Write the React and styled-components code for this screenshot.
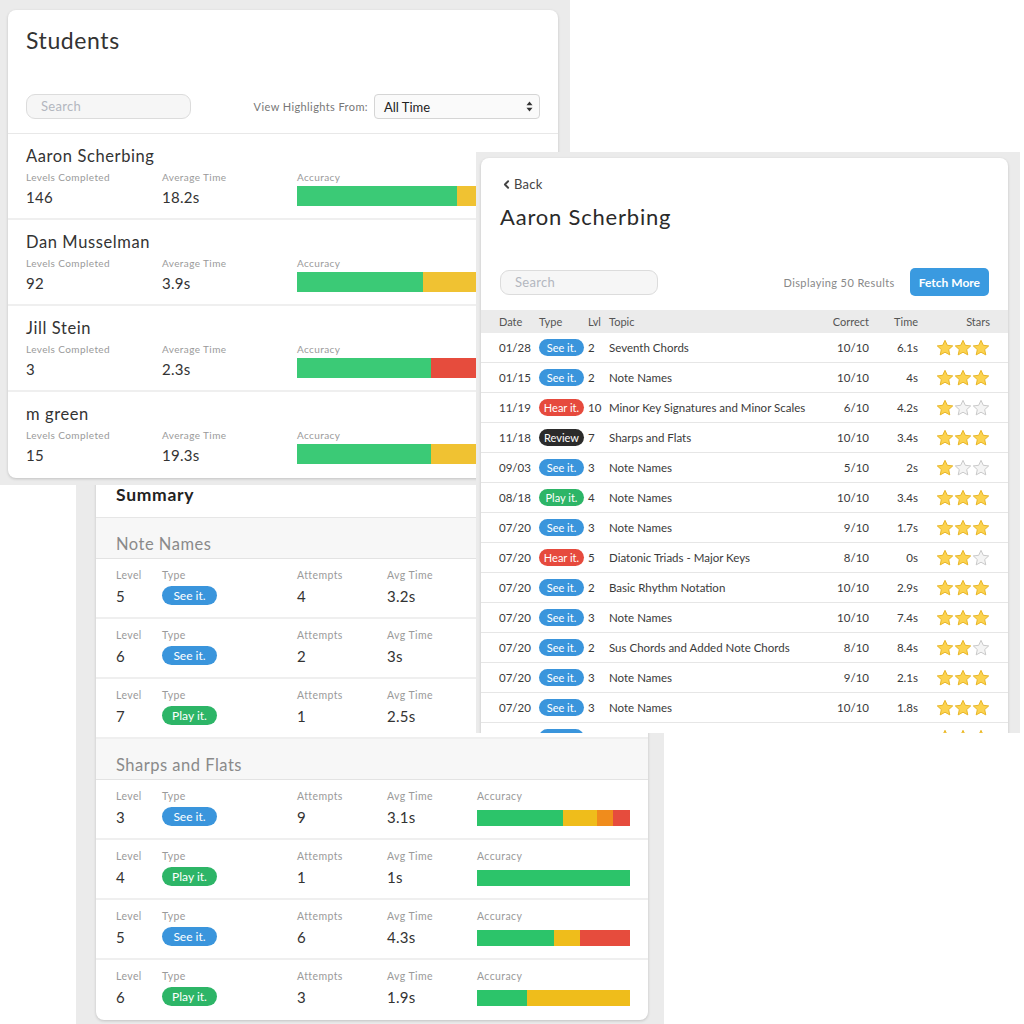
import React from 'react';
import styled, { createGlobalStyle } from 'styled-components';
import { ChevronLeft } from 'lucide-react';

const GlobalStyle = createGlobalStyle`
    body {
        margin: 0;
        background: #fff;
        font-family: "Lato", "Open Sans", sans-serif;
        color: #333;
    }
`

const Canvas = styled.div`
    position: relative;
    width: 1024px;
    height: 1024px;
    overflow: hidden;
    background: #fff;
`

// each screenshot is a window laid on the canvas
const Shot = styled.div`
    position: absolute;
    left: ${p => p.$x}px;
    top: ${p => p.$y}px;
    width: ${p => p.$w}px;
    height: ${p => p.$h}px;
    z-index: ${p => p.$z};
    padding: ${p => p.$pad};
    box-sizing: border-box;
    background: #ebebeb;
    overflow: hidden;
`
const Card = styled.div`
    background: #fff;
    border-radius: 8px;
    box-shadow: 0 1px 3px rgba(0, 0, 0, 0.18);
`

/* ---------- shared bits ---------- */

const SearchBox = styled.div`
    box-sizing: border-box;
    width: ${p => p.$w}px;
    height: 25px;
    border: 1px solid #dcdcdc;
    border-radius: 9px;
    background: #f6f6f6;
    color: #b3b7bf;
    font-size: 13px;
    letter-spacing: 0.3px;
    line-height: 23px;
    padding-left: 14px;
`
const PILL_COLORS = {
    see: '#3a95dc',
    play: '#2db567',
    hear: '#e64a3d',
    review: '#2b2b2b',
};
const PILL_TEXT = { see: 'See it.', play: 'Play it.', hear: 'Hear it.', review: 'Review' };

const Pill = styled.span`
    display: inline-flex;
    align-items: center;
    justify-content: center;
    width: ${p => p.$w}px;
    height: ${p => p.$h}px;
    border-radius: 10px;
    background: ${p => PILL_COLORS[p.$kind]};
    color: #fff;
    font-size: ${p => p.$fs}px;
`
const Bar = styled.div`
    display: flex;
    width: 100%;
    height: ${p => p.$h}px;
`
const Seg = styled.div`
    height: 100%;
    background: ${p => p.$c};
`

const AccuracyBar = ({ parts, h }) => (
    <Bar $h={h}>
        {parts.map(([c, w], i) => (
            <Seg key={i} $c={c} style={{ width: `${w}%` }} />
        ))}
    </Bar>
);

/* ---------- students ---------- */

const StudentsHead = styled.div`
    padding: 15px 18px 14px 18px;
    border-bottom: 1px solid #e8e8e8;
`
const Title = styled.h1`
    margin: 0;
    font-size: 23px;
    letter-spacing: 0.6px;
    line-height: 30px;
    font-weight: 400;
    color: #333;
`
const Toolbar = styled.div`
    display: flex;
    align-items: center;
    justify-content: space-between;
    margin-top: ${p => p.$mt}px;
`
const HighlightPick = styled.div`
    display: flex;
    align-items: center;
    gap: 6px;
    font-size: 11px;
    letter-spacing: 0.4px;
    color: #777;
`
const SelectBox = styled.div`
    box-sizing: border-box;
    display: flex;
    align-items: center;
    justify-content: space-between;
    width: 166px;
    height: 25px;
    padding: 0 6px 0 9px;
    border: 1px solid #d5d5d5;
    border-radius: 4px;
    background: #fafafa;
    font-size: 13px;
    letter-spacing: 0;
    color: #222;
`
const StudentRow = styled.div`
    padding: 12px 18px 0 18px;
    height: 86px;
    box-sizing: border-box;
    border-bottom: ${p => (p.$last ? 'none' : '2px solid #efefef')};
`
const StudentName = styled.div`
    font-size: 16.5px;
    letter-spacing: 0.6px;
    line-height: 20px;
    color: #333;
`
const StatGrid = styled.div`
    display: grid;
    grid-template-columns: 136px 135px 1fr;
    margin-top: 5px;
`
const Label = styled.div`
    font-size: ${p => p.$fs || 10}px;
    letter-spacing: 0.4px;
    line-height: 13px;
    color: #9a9a9a;
`
const Value = styled.div`
    font-size: 15px;
    letter-spacing: 0.3px;
    line-height: 20px;
    margin-top: ${p => p.$mt}px;
    color: #333;
`
const BarWrap = styled.div`
    margin-top: ${p => p.$mt}px;
`

const GREEN = '#3bca76';
const YELLOW = '#f0c232';
const RED = '#e64c3d';
const ORANGE = '#f08c1c';

const students = [
    { name: 'Aaron Scherbing', levels: 146, time: '18.2s', bar: [[GREEN, 66], [YELLOW, 20], [RED, 14]] },
    { name: 'Dan Musselman', levels: 92, time: '3.9s', bar: [[GREEN, 52], [YELLOW, 30], [RED, 18]] },
    { name: 'Jill Stein', levels: 3, time: '2.3s', bar: [[GREEN, 55], [RED, 45]] },
    { name: 'm green', levels: 15, time: '19.3s', bar: [[GREEN, 55], [YELLOW, 45]] },
];

const SortArrows = () => (
    <svg width="7" height="11" viewBox="0 0 7 11">
        <path d="M3.5 0.5 L6.5 4.2 H0.5 Z" fill="#333" />
        <path d="M3.5 10.5 L6.5 6.8 H0.5 Z" fill="#333" />
    </svg>
);

const Students = () => (
    <Card>
        <StudentsHead>
            <Title>Students</Title>
            <Toolbar $mt={39}>
                <SearchBox $w={165}>Search</SearchBox>
                <HighlightPick>
                    View Highlights From:
                    <SelectBox>
                        All Time
                        <SortArrows />
                    </SelectBox>
                </HighlightPick>
            </Toolbar>
        </StudentsHead>
        {students.map((s, i) => (
            <StudentRow key={s.name} $last={i === students.length - 1}>
                <StudentName>{s.name}</StudentName>
                <StatGrid>
                    <div>
                        <Label>Levels Completed</Label>
                        <Value $mt={3}>{s.levels}</Value>
                    </div>
                    <div>
                        <Label>Average Time</Label>
                        <Value $mt={3}>{s.time}</Value>
                    </div>
                    <div>
                        <Label>Accuracy</Label>
                        <BarWrap $mt={2}>
                            <AccuracyBar parts={s.bar} h={20} />
                        </BarWrap>
                    </div>
                </StatGrid>
            </StudentRow>
        ))}
    </Card>
);

/* ---------- student detail ---------- */

const DetailHead = styled.div`
    padding: 18px 19px 14px 19px;
`
const BackLink = styled.div`
    display: flex;
    align-items: center;
    gap: 1px;
    font-size: 13px;
    letter-spacing: 0.3px;
    line-height: 16px;
    color: #444;
`
const DetailName = styled.h2`
    margin: 12px 0 0 0;
    font-size: 22px;
    letter-spacing: 0.8px;
    line-height: 26px;
    font-weight: 400;
    color: #2a2a2a;
`
const ResultsRight = styled.div`
    display: flex;
    align-items: center;
    gap: 15px;
    font-size: 11px;
    letter-spacing: 0.4px;
    color: #888;
`
const FetchButton = styled.button`
    height: 28px;
    padding: 0 9px;
    border: none;
    border-radius: 5px;
    background: #3a9ae0;
    color: #fff;
    font-family: inherit;
    font-size: 12px;
    font-weight: 700;
`
const TableRow = styled.div`
    display: grid;
    grid-template-columns: 40px 49px 21px 220px 40px 49px 1fr;
    align-items: center;
    height: ${p => (p.$head ? 23 : 30)}px;
    padding: 0 18px;
    background: ${p => (p.$head ? '#ebebeb' : '#fff')};
    border-bottom: ${p => (p.$head ? 'none' : '1px solid #e6e6e6')};
    font-size: ${p => (p.$head ? 11 : 11.5)}px;
    color: ${p => (p.$head ? '#555' : '#3a3a3a')};
    box-sizing: border-box;
`
const Cell = styled.div`
    text-align: ${p => p.$align || 'left'};
    white-space: nowrap;
`
const Stars = styled.div`
    display: flex;
    justify-content: flex-end;
    gap: 0;
`

const Star = ({ on }) => (
    <svg width="18" height="18" viewBox="0 0 24 24">
        <polygon
            points="12,1.8 15.1,8.4 22.3,9.2 16.9,14.1 18.4,21.2 12,17.6 5.6,21.2 7.1,14.1 1.7,9.2 8.9,8.4"
            fill={on ? '#fcd34f' : '#f4f4f4'}
            stroke={on ? '#e7b526' : '#c9c9c9'}
            strokeWidth="1.3"
            strokeLinejoin="round"
        />
    </svg>
);

const history = [
    ['01/28', 'see', 2, 'Seventh Chords', '10/10', '6.1s', 3],
    ['01/15', 'see', 2, 'Note Names', '10/10', '4s', 3],
    ['11/19', 'hear', 10, 'Minor Key Signatures and Minor Scales', '6/10', '4.2s', 1],
    ['11/18', 'review', 7, 'Sharps and Flats', '10/10', '3.4s', 3],
    ['09/03', 'see', 3, 'Note Names', '5/10', '2s', 1],
    ['08/18', 'play', 4, 'Note Names', '10/10', '3.4s', 3],
    ['07/20', 'see', 3, 'Note Names', '9/10', '1.7s', 3],
    ['07/20', 'hear', 5, 'Diatonic Triads - Major Keys', '8/10', '0s', 2],
    ['07/20', 'see', 2, 'Basic Rhythm Notation', '10/10', '2.9s', 3],
    ['07/20', 'see', 3, 'Note Names', '10/10', '7.4s', 3],
    ['07/20', 'see', 2, 'Sus Chords and Added Note Chords', '8/10', '8.4s', 2],
    ['07/20', 'see', 3, 'Note Names', '9/10', '2.1s', 3],
    ['07/20', 'see', 3, 'Note Names', '10/10', '1.8s', 3],
    ['07/20', 'see', 3, 'Note Names', '10/10', '2.4s', 3],
];

const Detail = () => (
    <Card>
        <DetailHead>
            <BackLink>
                <ChevronLeft size={13} strokeWidth={3.5} />
                Back
            </BackLink>
            <DetailName>Aaron Scherbing</DetailName>
            <Toolbar $mt={38}>
                <SearchBox $w={158}>Search</SearchBox>
                <ResultsRight>
                    Displaying 50 Results
                    <FetchButton type="button">Fetch More</FetchButton>
                </ResultsRight>
            </Toolbar>
        </DetailHead>
        <TableRow $head>
            <Cell>Date</Cell>
            <Cell>Type</Cell>
            <Cell>Lvl</Cell>
            <Cell>Topic</Cell>
            <Cell $align="right">Correct</Cell>
            <Cell $align="right">Time</Cell>
            <Cell $align="right">Stars</Cell>
        </TableRow>
        {history.map(([date, kind, lvl, topic, correct, time, stars], i) => (
            <TableRow key={i}>
                <Cell>{date}</Cell>
                <Cell>
                    <Pill $kind={kind} $w={45} $h={17} $fs={11}>{PILL_TEXT[kind]}</Pill>
                </Cell>
                <Cell>{lvl}</Cell>
                <Cell>{topic}</Cell>
                <Cell $align="right">{correct}</Cell>
                <Cell $align="right">{time}</Cell>
                <Stars>
                    {[0, 1, 2].map(n => <Star key={n} on={n < stars} />)}
                </Stars>
            </TableRow>
        ))}
    </Card>
);

/* ---------- summary ---------- */

const SummaryHead = styled.div`
    padding: 24px 20px 11px 20px;
    font-size: 17.5px;
    letter-spacing: 0.7px;
    line-height: 22px;
    font-weight: 700;
    color: #222;
    border-bottom: 1px solid #e6e6e6;
`
const SectionHead = styled.div`
    padding: 16px 20px 4px 20px;
    background: #f7f7f7;
    border-bottom: 1px solid #e3e3e3;
    font-size: 16.5px;
    letter-spacing: 0.5px;
    line-height: 20px;
    color: #8a8a8a;
`
const LevelRow = styled.div`
    display: grid;
    grid-template-columns: 46px 135px 90px 90px 1fr;
    height: 60px;
    box-sizing: border-box;
    padding: 10px 18px 0 20px;
    border-bottom: ${p => (p.$last ? 'none' : '2px solid #efefef')};
`
const PillSpot = styled.div`
    margin-top: 2px;
`

const SGREEN = '#2cc46a';
const SYELLOW = '#efbd1b';

const sections = [
    {
        title: 'Note Names',
        rows: [
            [5, 'see', 4, '3.2s', [[SGREEN, 75], [SYELLOW, 25]]],
            [6, 'see', 2, '3s', [[SGREEN, 100]]],
            [7, 'play', 1, '2.5s', [[SGREEN, 100]]],
        ],
    },
    {
        title: 'Sharps and Flats',
        rows: [
            [3, 'see', 9, '3.1s', [[SGREEN, 56], [SYELLOW, 22.5], [ORANGE, 10.5], [RED, 11]]],
            [4, 'play', 1, '1s', [[SGREEN, 100]]],
            [5, 'see', 6, '4.3s', [[SGREEN, 50], [SYELLOW, 17], [RED, 33]]],
            [6, 'play', 3, '1.9s', [[SGREEN, 33], [SYELLOW, 67]]],
        ],
    },
];

const Summary = () => (
    <Card>
        <SummaryHead>Summary</SummaryHead>
        {sections.map((sec, si) => (
            <div key={sec.title}>
                <SectionHead>{sec.title}</SectionHead>
                {sec.rows.map(([lvl, kind, attempts, avg, bar], i) => (
                    <LevelRow key={i} $last={si === sections.length - 1 && i === sec.rows.length - 1}>
                        <div>
                            <Label $fs={10.5}>Level</Label>
                            <Value $mt={4}>{lvl}</Value>
                        </div>
                        <div>
                            <Label $fs={10.5}>Type</Label>
                            <PillSpot>
                                <Pill $kind={kind} $w={55} $h={19} $fs={12}>{PILL_TEXT[kind]}</Pill>
                            </PillSpot>
                        </div>
                        <div>
                            <Label $fs={10.5}>Attempts</Label>
                            <Value $mt={4}>{attempts}</Value>
                        </div>
                        <div>
                            <Label $fs={10.5}>Avg Time</Label>
                            <Value $mt={4}>{avg}</Value>
                        </div>
                        <div>
                            <Label $fs={10.5}>Accuracy</Label>
                            <BarWrap $mt={7}>
                                <AccuracyBar parts={bar} h={16} />
                            </BarWrap>
                        </div>
                    </LevelRow>
                ))}
            </div>
        ))}
    </Card>
);

const App = () => (
    <Canvas>
        <GlobalStyle />
        <Shot $x={76} $y={450} $w={588} $h={574} $z={1} $pad="10px 16px 0 20px">
            <Summary />
        </Shot>
        <Shot $x={0} $y={0} $w={570} $h={485} $z={2} $pad="10px 12px 0 8px">
            <Students />
        </Shot>
        <Shot $x={476} $y={152} $w={544} $h={581} $z={3} $pad="6px 12px 0 5px">
            <Detail />
        </Shot>
    </Canvas>
);

export default App;
